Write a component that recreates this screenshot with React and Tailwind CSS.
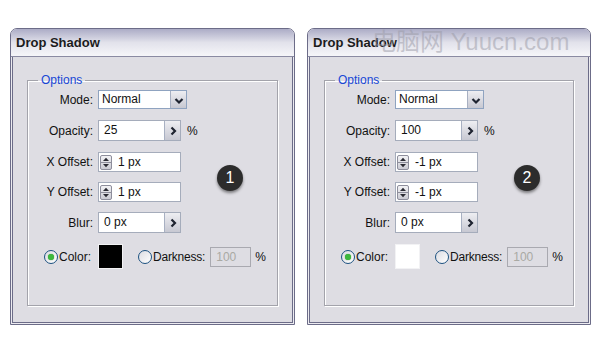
import React from 'react'

const font = "font-['Liberation_Sans',Arial,sans-serif]"

function Chevron({ dir = 'down' }) {
  const pts = dir === 'down' ? '3.5,6 7,9.5 10.5,6' : '5.5,3.5 9,7 5.5,10.5'
  return (
    <svg width="14" height="14" viewBox="0 0 14 14">
      <polyline points={pts} fill="none" stroke="#1e2330" strokeWidth="2.2" />
    </svg>
  )
}

function Spinner() {
  return (
    <svg width="12" height="15" viewBox="0 0 12 15" className="shrink-0">
      <defs>
        <linearGradient id="sp" x1="0" y1="0" x2="0" y2="1">
          <stop offset="0" stopColor="#f4f4f6" />
          <stop offset="1" stopColor="#c9c9d2" />
        </linearGradient>
      </defs>
      <rect x="0.5" y="0.5" width="11" height="14" rx="1.5" fill="url(#sp)" stroke="#8e8e9c" />
      <line x1="1" y1="7.5" x2="11" y2="7.5" stroke="#8e8e9c" />
      <polygon points="3,6 6,2.8 9,6" fill="#2a2a33" />
      <polygon points="3,9 6,12.2 9,9" fill="#2a2a33" />
    </svg>
  )
}

function Radio() {
  return (
    <span className="w-[14px] h-[14px] rounded-full border border-[#1c5180] bg-gradient-to-br from-[#dcdce2] to-white flex items-center justify-center shrink-0">
      <span className="w-[6px] h-[6px] rounded-full bg-[#3db83d] shadow-[0_0_1px_#2a8f2a]" />
    </span>
  )
}

function RadioOff() {
  return (
    <span className="w-[14px] h-[14px] rounded-full border border-[#1c5180] bg-gradient-to-br from-[#dcdce2] to-white shrink-0" />
  )
}

function Label({ children }) {
  return <div className="w-[66px] text-right pr-[1px]">{children}</div>
}

function ArrowBtn() {
  return (
    <div className="w-[16px] h-full border-l border-[#a8b0c2] bg-gradient-to-b from-[#eeeef2] to-[#c7c8d2] flex items-center justify-center">
      <Chevron dir="right" />
    </div>
  )
}

function Panel({ opacity, off, swatch, badge, w }) {
  return (
    <div className={`relative ${w} h-[297px] flex flex-col rounded-t-[7px] border border-[#6c6c88] bg-[#ecebf0]`}>
      <div className="h-[28px] shrink-0 rounded-t-[6px] bg-gradient-to-b from-[#acacc6] via-[#e2e2eb] to-[#f6f6f9] border-b border-[#8a8aa2] flex items-center pl-[5px] text-[13px] font-bold text-[#1c1c1c]">
        Drop Shadow
      </div>
      <div className="flex-1 mx-[1px] mb-[1px] border-x border-b border-[#6c6c88] bg-[#dedde3] px-[14px] pt-[16px] pb-[16px] flex">
        <fieldset className="flex-1 border border-[#a3a3ab] shadow-[inset_1px_1px_0_#fff,1px_1px_0_#fff] text-[12px] text-[#111]">
          <legend className="ml-[10px] px-[3px] text-[12px] leading-[14px] text-[#1747d6]">Options</legend>
          <div className="flex flex-col pt-[3px]">
            <div className="flex items-center gap-[4px] h-[19px]">
              <Label>Mode:</Label>
              <div className="w-[89px] h-full border border-[#8fa3c0] bg-white flex">
                <div className="flex-1 pl-[3px] leading-[17px]">Normal</div>
                <div className="w-[16px] h-full border-l border-[#a8b0c2] bg-gradient-to-b from-[#eeeef2] to-[#c7c8d2] flex items-center justify-center">
                  <Chevron />
                </div>
              </div>
            </div>
            <div className="flex items-center gap-[4px] h-[21px] mt-[11px]">
              <Label>Opacity:</Label>
              <div className="w-[83px] h-full border border-[#a5acbb] bg-white flex">
                <div className="flex-1 pl-[5px] leading-[19px]">{opacity}</div>
                <ArrowBtn />
              </div>
              <span className="ml-[2px]">%</span>
            </div>
            <div className="flex items-center gap-[4px] h-[20px] mt-[11px]">
              <Label>X Offset:</Label>
              <div className="w-[83px] h-full border border-[#a5acbb] bg-white flex items-center pl-[1px] gap-[6px]">
                <Spinner />
                <span>{off}</span>
              </div>
            </div>
            <div className="flex items-center gap-[4px] h-[20px] mt-[10px]">
              <Label>Y Offset:</Label>
              <div className="w-[83px] h-full border border-[#a5acbb] bg-white flex items-center pl-[1px] gap-[6px]">
                <Spinner />
                <span>{off}</span>
              </div>
            </div>
            <div className="flex items-center gap-[4px] h-[21px] mt-[10px]">
              <Label>Blur:</Label>
              <div className="w-[83px] h-full border border-[#a5acbb] bg-white flex">
                <div className="flex-1 pl-[5px] leading-[19px]">0 px</div>
                <ArrowBtn />
              </div>
            </div>
            <div className="flex items-center h-[25px] mt-[11px]">
              <div className="w-[66px] flex items-center justify-end gap-[1px] pr-[3px]">
                <Radio />
                <span>Color:</span>
              </div>
              <div className={`ml-[4px] w-[25px] h-[25px] ${swatch} border border-[#f2f2f4]`} />
              <div className="ml-[15px] flex items-center gap-[1px]">
                <RadioOff />
                <span className="tracking-[-0.2px]">Darkness:</span>
              </div>
              <div className="ml-[5px] w-[41px] h-[20px] border border-[#a9a9b0] text-[#a9a9a4] pl-[5px] leading-[18px]">100</div>
              <span className="ml-[4px]">%</span>
            </div>
          </div>
        </fieldset>
      </div>
      <div className="absolute left-[206px] top-[136px] w-[26px] h-[26px] rounded-full bg-[#2c2c2c] shadow-[0_2px_3px_rgba(0,0,0,0.45)] flex items-center justify-center text-white text-[16px] leading-none">
        {badge}
      </div>
    </div>
  )
}

export default function App() {
  return (
    <div className={`relative w-[600px] h-[350px] bg-white ${font}`}>
      <div className="flex gap-[12px] pl-[10px] pt-[28px]">
        <Panel opacity="25" off="1 px" swatch="bg-black" badge="1" w="w-[285px]" />
        <Panel opacity="100" off="-1 px" swatch="bg-white" badge="2" w="w-[284px]" />
      </div>
      <div className="absolute left-[372px] top-[24px] text-[24px] text-[#9a9aa6]/50 font-['Liberation_Sans','Noto_Sans_CJK_SC',sans-serif] whitespace-nowrap">
        电脑网 Yuucn.com
      </div>
    </div>
  )
}
